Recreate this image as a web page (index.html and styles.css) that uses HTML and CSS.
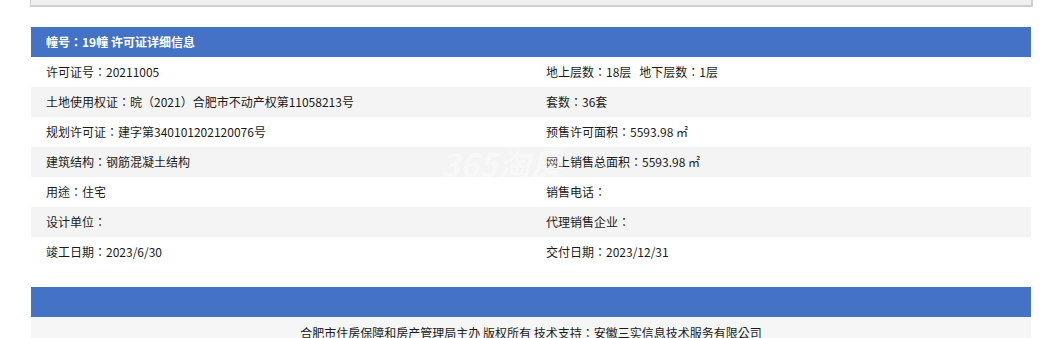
FILE: index.html
```html
<!DOCTYPE html>
<html>
<head>
<meta charset="utf-8">
<title>许可证详细信息</title>
<link rel="stylesheet" href="styles.css">
</head>
<body>
<div class="page">
  <div class="topbox"></div>
  <div class="panel">
    <div class="head">幢号：19幢 许可证详细信息</div>
    <div class="grid">
      <div class="row">
        <div class="cell">许可证号：20211005</div>
        <div class="cell">地上层数：18层<span class="sp">地下层数：1层</span></div>
      </div>
      <div class="row alt">
        <div class="cell">土地使用权证：晥（2021）合肥市不动产权第11058213号</div>
        <div class="cell">套数：36套</div>
      </div>
      <div class="row">
        <div class="cell">规划许可证：建字第340101202120076号</div>
        <div class="cell">预售许可面积：5593.98 ㎡</div>
      </div>
      <div class="row alt">
        <div class="cell">建筑结构：钢筋混凝土结构</div>
        <div class="cell">网上销售总面积：5593.98 ㎡</div>
      </div>
      <div class="row">
        <div class="cell">用途：住宅</div>
        <div class="cell">销售电话：</div>
      </div>
      <div class="row alt">
        <div class="cell">设计单位：</div>
        <div class="cell">代理销售企业：</div>
      </div>
      <div class="row">
        <div class="cell">竣工日期：2023/6/30</div>
        <div class="cell">交付日期：2023/12/31</div>
      </div>
      <div class="watermark">365淘房</div>
    </div>
  </div>
  <div class="footbar"></div>
  <div class="foot">合肥市住房保障和房产管理局主办 版权所有 技术支持：安徽三实信息技术服务有限公司</div>
</div>
</body>
</html>
```

FILE: styles.css
```css
html, body {
  margin: 0;
  padding: 0;
  background: #fff;
}
body {
  font-family: "Noto Sans CJK TC", "Noto Sans CJK SC", sans-serif;
  font-size: 12px;
  color: #1a1a1a;
}
.page {
  width: 1000px;
  margin-left: 31px;
}
.topbox {
  height: 5px;
  width: 1000px;
  background: #f0f0f0;
  border-left: 1px solid #cfcfcf;
  border-right: 2px solid #cfcfcf;
  border-bottom: 2px solid #cfcfcf;
  margin-left: -1px;
}
.panel {
  margin-top: 20px;
}
.head {
  height: 30px;
  line-height: 30px;
  background: #4472c4;
  color: #fff;
  font-weight: bold;
  padding-left: 15px;
}
.grid {
  position: relative;
}
.row {
  display: grid;
  grid-template-columns: 500px 500px;
  height: 30px;
  line-height: 30px;
  background: #fff;
}
.row.alt {
  background: #f4f4f4;
}
.cell {
  padding-left: 15px;
  white-space: nowrap;
}
.sp {
  margin-left: 8px;
}
.watermark {
  position: absolute;
  left: 410px;
  top: 88px;
  font-size: 32px;
  font-weight: bold;
  font-style: italic;
  color: rgba(255, 255, 255, 0.45);
  line-height: 36px;
  pointer-events: none;
}
.footbar {
  margin-top: 20px;
  height: 30px;
  background: #4472c4;
}
.foot {
  background: #f6f6f6;
  text-align: center;
  padding-top: 6px;
  line-height: 20px;
  height: 40px;
}
```
